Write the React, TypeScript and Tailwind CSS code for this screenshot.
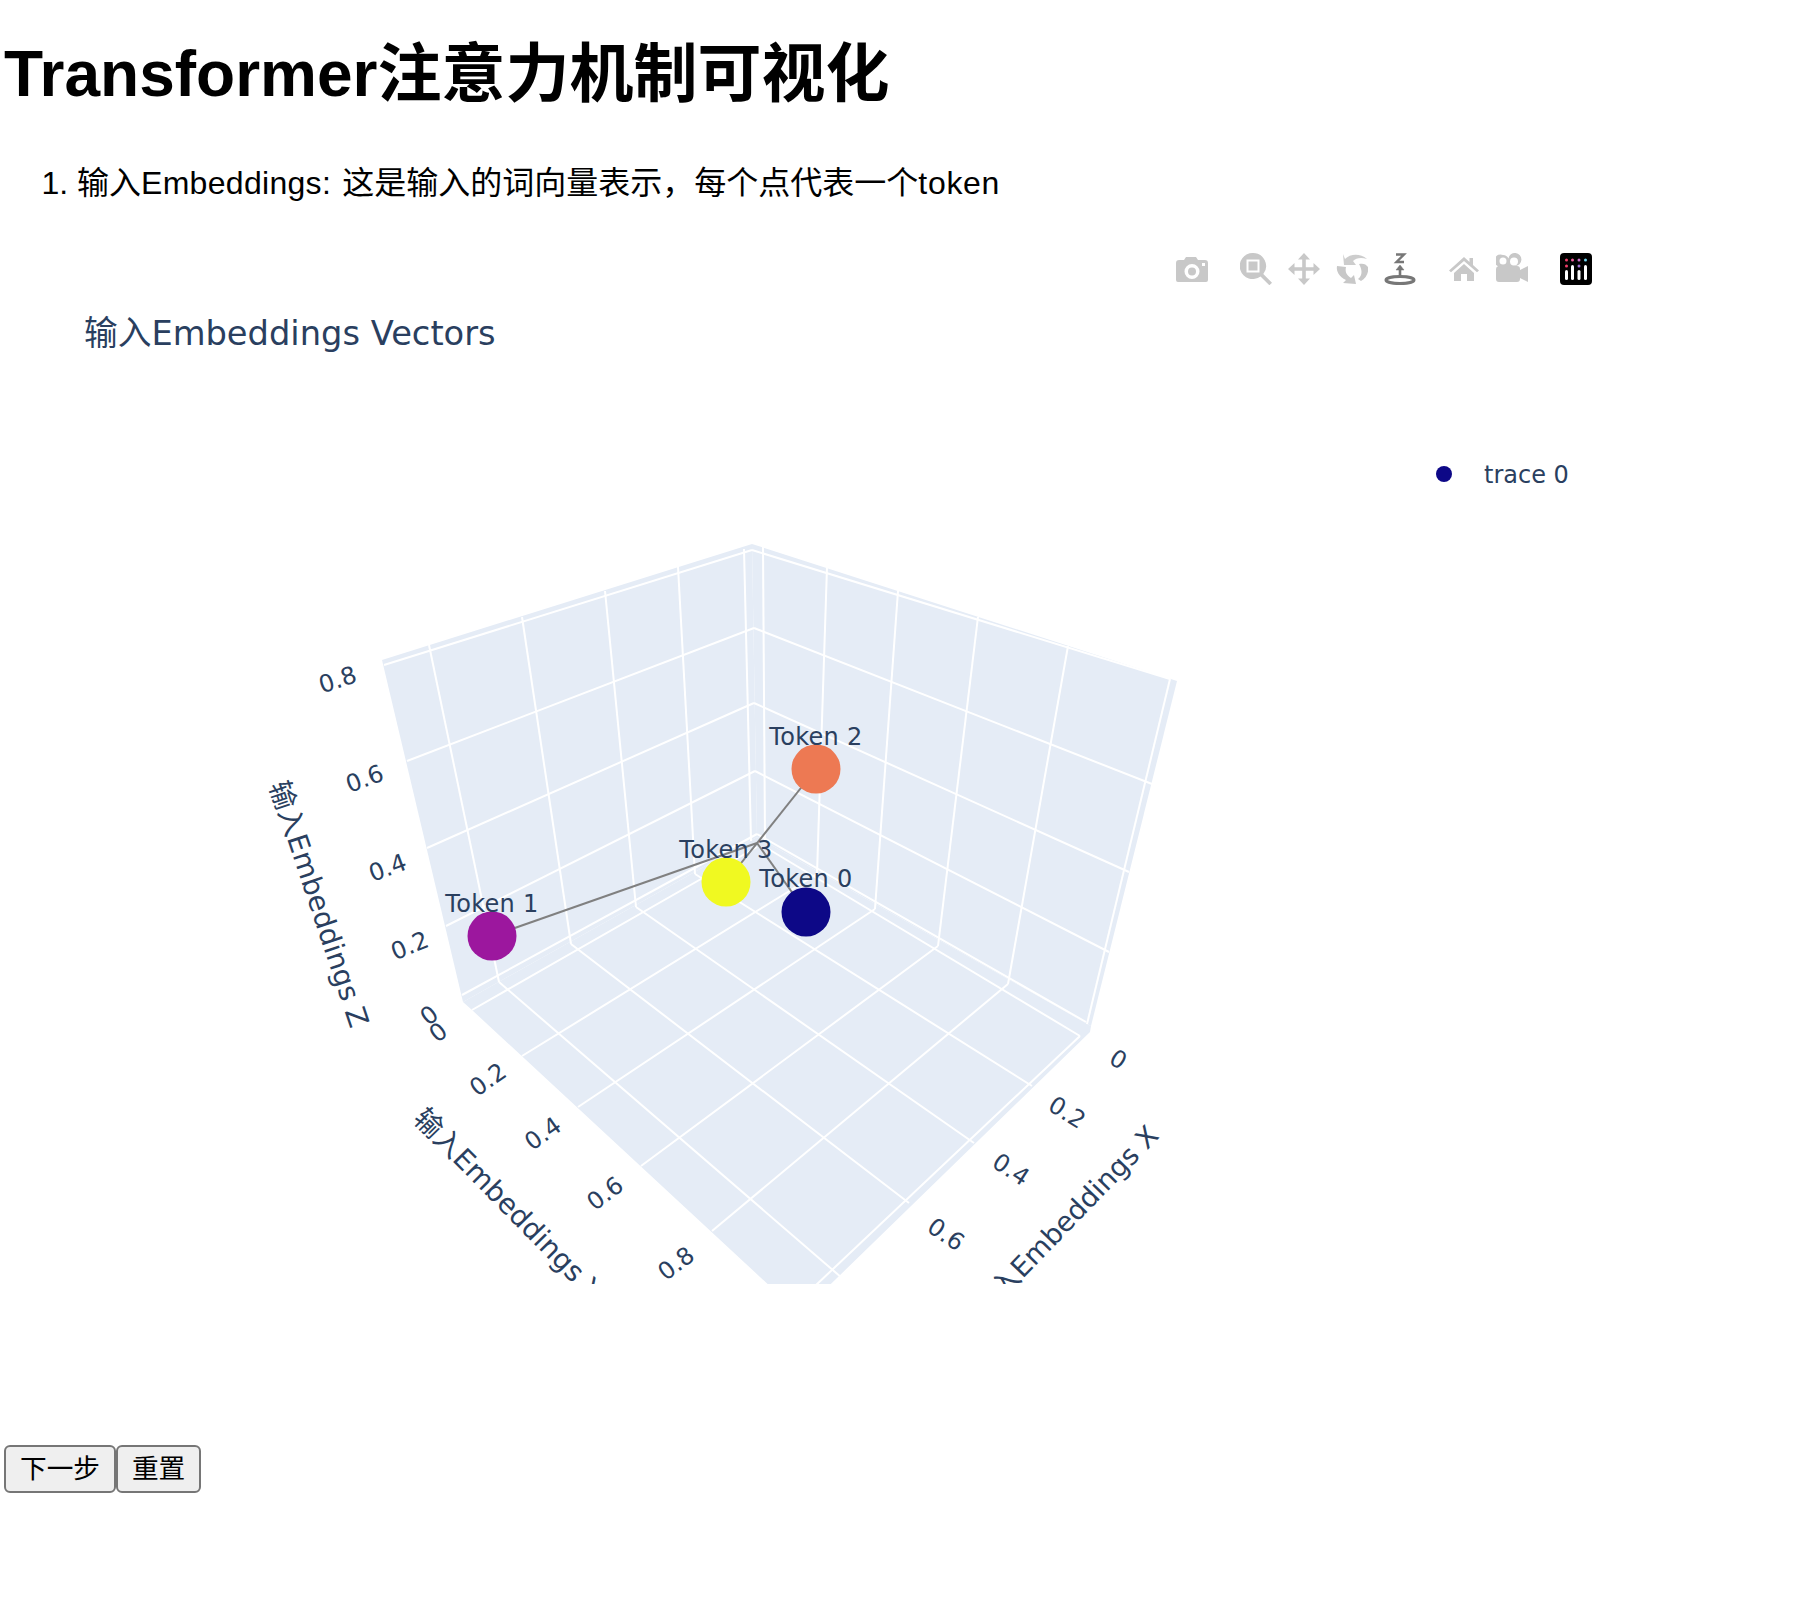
import React from "react";

const wallLines = [
    // left wall, verticals
    [429, 646, 499, 983], [522, 618, 571, 945], [605, 592, 636, 908], [678, 568, 695, 875], [744, 550, 751, 842],
    // right wall, verticals
    [763, 548, 765, 842], [827, 568, 817, 875], [898, 592, 875, 910], [978, 618, 938, 947], [1068, 647, 1008, 985], [1170, 680, 1087, 1025],
    // z grid, left wall then right wall
    [407, 762, 754, 629], [427, 849, 754, 704], [446, 927, 755, 772], [462, 996, 757, 835],
    [754, 629, 1152, 785], [754, 704, 1129, 873], [755, 772, 1109, 953], [757, 835, 1086, 1023],
    // top edges
    [384, 666, 752, 551], [752, 551, 1170, 680],
    // floor, x constant
    [1032, 1087, 695, 875], [974, 1144, 636, 908], [909, 1204, 571, 945], [842, 1279, 499, 983], [1080, 1037, 765, 848],
    // floor, y constant
    [522, 1057, 817, 875], [578, 1108, 875, 910], [641, 1167, 938, 947], [712, 1232, 1008, 985], [472, 1011, 757, 848], [1080, 1037, 780, 1320],
];

const tickLabels = [
    { text: "0.8", x: 337, y: 679, r: -18 },
    { text: "0.6", x: 364, y: 778, r: -20 },
    { text: "0.4", x: 387, y: 867, r: -20 },
    { text: "0.2", x: 409, y: 945, r: -22 },
    { text: "0", x: 428, y: 1015, r: -38 },
    { text: "0", x: 437, y: 1032, r: -38 },
    { text: "0.2", x: 487, y: 1079, r: -35 },
    { text: "0.4", x: 542, y: 1133, r: -35 },
    { text: "0.6", x: 604, y: 1193, r: -37 },
    { text: "0.8", x: 675, y: 1263, r: -37 },
    { text: "0", x: 1119, y: 1059, r: 30 },
    { text: "0.2", x: 1068, y: 1112, r: 32 },
    { text: "0.4", x: 1012, y: 1169, r: 33 },
    { text: "0.6", x: 947, y: 1234, r: 35 },
    { text: "0.8", x: 872, y: 1308, r: 36 },
];

const tokens = [
    { name: "Token 3", x: 726, y: 883, color: "#f0f921", labelY: 859 },
    { name: "Token 1", x: 492, y: 937, color: "#9c179e", labelY: 913 },
    { name: "Token 2", x: 816, y: 770, color: "#ed7953", labelY: 746 },
    { name: "Token 0", x: 806, y: 913, color: "#0d0887", labelY: 888 },
];

function CameraIcon() {
    return (
        <svg width="32" height="32" viewBox="0 0 32 32" className="fill-[#c8c8c8]">
            <path fillRule="evenodd" d="M3 7h5l2-3h10l2 3h7a3 3 0 0 1 3 3v17a2 2 0 0 1-2 2H2a2 2 0 0 1-2-2V10a3 3 0 0 1 3-3Zm13 4a7.500 7.500 0 1 0 0 15 7.500 7.500 0 0 0 0-15Zm0 3.500a4 4 0 1 1 0 8 4 4 0 0 1 0-8ZM26 10h3v3h-3Z" />
        </svg>
    );
}

function ZoomIcon() {
    return (
        <svg width="32" height="32" viewBox="0 0 32 32" className="fill-[#c8c8c8]">
            <path fillRule="evenodd" d="M13 0a13 13 0 0 1 10.300 21l8.700 8.700-2.600 2.600-8.900-8.900A13 13 0 1 1 13 0ZM6.500 6.500v13h13v-13ZM8.500 8.500h9v9h-9Z" />
        </svg>
    );
}

function PanIcon() {
    return (
        <svg width="32" height="32" viewBox="0 0 32 32" className="fill-[#c8c8c8]">
            <path d="M16 0l6 6.500h-4.200v7.700h7.700V10l6.500 6-6.500 6v-4.200h-7.700v7.700H22L16 32l-6-6.500h4.200v-7.700H6.500V22L0 16l6.500-6v4.200h7.700V6.500H10Z" />
        </svg>
    );
}

function OrbitIcon() {
    return (
        <svg width="32" height="32" viewBox="0 0 32 32" className="fill-[#c8c8c8]">
            <path d="M9 6C14 1 24 0 31 6c-6-2-11-1-14 2l3 4H8L7 1Z" opacity="0.9" />
            <path d="M1 13l9 1c-1 4 0 8 5 11l3-3 2 9-13-1 3-3C3 24 0 18 1 13Z" />
            <path d="M23 11c4-1 7 0 9 3 1 6-2 11-7 14-1-1-2-1-3-2 5-4 4-10 1-15Z" />
        </svg>
    );
}

function TurntableIcon() {
    return (
        <svg width="32" height="32" viewBox="0 0 32 32" fill="none" className="stroke-[#777777]">
            <path d="M12 1.500h8L12.500 9h7.500" strokeWidth="2.400" />
            <path d="M16 25V14" strokeWidth="2.600" />
            <path d="M12 17l4-5 4 5Z" className="fill-[#777777]" strokeWidth="0.500" />
            <ellipse cx="16" cy="27" rx="14" ry="3.500" strokeWidth="3" />
        </svg>
    );
}

function HomeIcon() {
    return (
        <svg width="32" height="32" viewBox="0 0 32 32" className="fill-[#c8c8c8]">
            <path d="M16 4l-15 13.500 2 1.800L16 8l13 11.300 2-1.800-6-5.400V5h-3.500v4ZM6 20l10-9 10 9v8h-7v-7h-6v7H6Z" />
        </svg>
    );
}

function VideoIcon() {
    return (
        <svg width="32" height="32" viewBox="0 0 32 32" className="fill-[#c8c8c8]">
            <path fillRule="evenodd" d="M7 2a6 6 0 0 1 5.500 3.500A6.500 6.500 0 1 1 19 13h2a3 3 0 0 1 3 3v1l8-4v16l-8-4v1a3 3 0 0 1-3 3H3a3 3 0 0 1-3-3V16a3 3 0 0 1 2-2.800A6 6 0 0 1 7 2Zm0 2.500a3.500 3.500 0 1 0 0 7 3.500 3.500 0 0 0 0-7Zm11 0a4 4 0 1 0 0 8 4 4 0 0 0 0-8Z" />
        </svg>
    );
}

function PlotlyIcon() {
    return (
        <svg width="32" height="32" viewBox="0 0 32 32">
            <rect width="32" height="32" rx="4" fill="#000000" />
            <circle cx="6.500" cy="7" r="1.500" fill="#ef3e6a" />
            <circle cx="12.500" cy="7" r="1.500" fill="#ef5a9a" />
            <circle cx="19" cy="7" r="1.500" fill="#c870c8" />
            <circle cx="25.500" cy="7" r="1.500" fill="#6fd5f0" />
            <circle cx="6.500" cy="13" r="1.500" fill="#ef3e6a" />
            <circle cx="19" cy="13" r="1.500" fill="#a070d0" />
            <rect x="5" y="17" width="3" height="10" rx="1.500" fill="#ffffff" />
            <rect x="11" y="12" width="3" height="15" rx="1.500" fill="#ffffff" />
            <rect x="17.500" y="17" width="3" height="10" rx="1.500" fill="#ffffff" />
            <rect x="24" y="12" width="3" height="15" rx="1.500" fill="#ffffff" />
        </svg>
    );
}

function Chart() {
    return (
        <svg width="1600" height="1206" viewBox="4 240 1600 1206" className="block [font-family:'DejaVu_Sans','Noto_Sans_CJK_SC',sans-serif] fill-[#2a3f5f]">
            <defs>
                <clipPath id="scene">
                    <rect x="4" y="240" width="1600" height="1045" />
                </clipPath>
            </defs>

            <text x="84" y="346" fontSize="33.700">输入Embeddings Vectors</text>

            <circle cx="1444" cy="475" r="8" fill="#0d0887" />
            <text x="1484" y="484" fontSize="24">trace 0</text>

            <g clipPath="url(#scene)">
                <polygon points="382,661 752,545 757,838 463,1003" fill="#e5ecf6" />
                <polygon points="752,545 1177,682 1091,1027 757,838" fill="#e5ecf6" />
                <polygon points="463,1003 472,1011 800,1315 1090,1033 1091,1027 757,838" fill="#e5ecf6" />
                {wallLines.map(([x1, y1, x2, y2], i) => (
                    <line key={i} x1={x1} y1={y1} x2={x2} y2={y2} stroke="#ffffff" strokeWidth="2" />
                ))}

                {tickLabels.map((tick, i) => (
                    <text key={i} x={tick.x} y={tick.y + 10} fontSize="24" textAnchor="middle" transform={`rotate(${tick.r} ${tick.x} ${tick.y})`}>{tick.text}</text>
                ))}

                <text x="269" y="786" fontSize="28" transform="rotate(71.500 269 786)">输入Embeddings Z</text>
                <text x="412" y="1121" fontSize="28" transform="rotate(45.500 412 1121)">输入Embeddings Y</text>
                <text x="1160" y="1138" fontSize="27.500" textAnchor="end" transform="rotate(-46 1160 1138)">输入Embeddings X</text>

                <g stroke="#808080" strokeWidth="2">
                    <line x1="492" y1="937" x2="757" y2="844" />
                    <line x1="816" y1="770" x2="726" y2="883" />
                    <line x1="806" y1="913" x2="757" y2="844" />
                </g>
                {tokens.map((token) => (
                    <circle key={token.name} cx={token.x} cy={token.y} r="24.500" fill={token.color} />
                ))}
                {tokens.map((token) => (
                    <text key={token.name} x={token.x} y={token.labelY} fontSize="24" textAnchor="middle" className="tracking-[0.3px]">{token.name}</text>
                ))}
            </g>
        </svg>
    );
}

export default function App() {
    return (
        <div className="px-1 text-black [font-family:'Liberation_Sans','Noto_Sans_CJK_SC',sans-serif]">
            <h1 className="mt-[37px] text-[64px] leading-[74px] font-bold">Transformer注意力机制可视化</h1>
            <ol className="mt-[54px] list-decimal pl-[73px] text-[32px] leading-[37px]">
                <li>输入<span className="tracking-[0.3px] [word-spacing:2px]">Embeddings: </span>这是输入的词向量表示，每个点代表一个<span className="tracking-[0.7px]">token</span></li>
            </ol>

            <div className="relative mt-[37px] w-[1600px]">
                <Chart />
                <div className="absolute top-[14px] left-[1172px] flex items-center">
                    <CameraIcon />
                    <div className="ml-[32px] flex gap-[16px]">
                        <ZoomIcon />
                        <PanIcon />
                        <OrbitIcon />
                        <TurntableIcon />
                    </div>
                    <div className="ml-[32px] flex gap-[16px]">
                        <HomeIcon />
                        <VideoIcon />
                    </div>
                    <div className="ml-[32px]">
                        <PlotlyIcon />
                    </div>
                </div>
            </div>

            <div className="flex">
                <button className="h-[48px] rounded-[6px] border-2 border-[#767676] bg-[#efefef] px-[14px] text-[26.670px]">下一步</button>
                <button className="h-[48px] rounded-[6px] border-2 border-[#767676] bg-[#efefef] px-[14px] text-[26.670px]">重置</button>
            </div>
        </div>
    );
}
